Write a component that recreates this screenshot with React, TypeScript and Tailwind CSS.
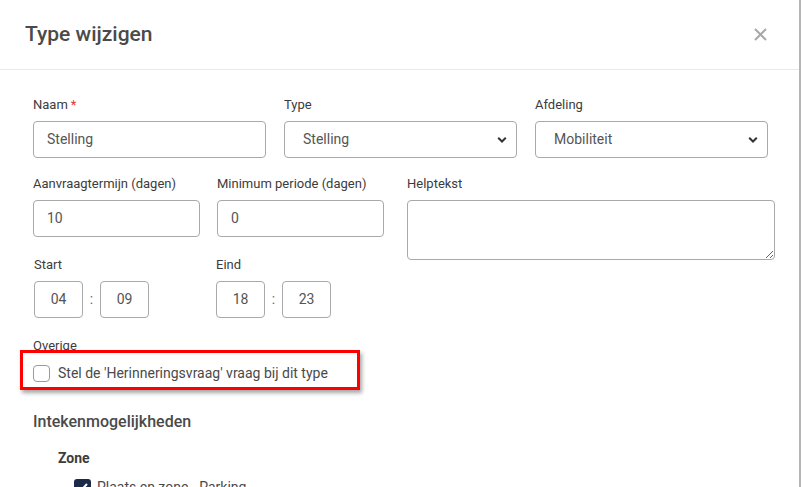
import React from "react";

const font = { fontFamily: "Roboto, 'Liberation Sans', sans-serif" };

function Label({ children, required }: { children: React.ReactNode; required?: boolean }) {
  return (
    <label className="block text-[13px] font-normal text-[#3c3c3c] leading-[16px] mb-[8px]">
      {children}
      {required && <span className="text-[#e3342f] ml-[3px]">*</span>}
    </label>
  );
}

function Chevron() {
  return (
    <svg className="absolute right-[10px] top-1/2 -translate-y-1/2" width="10" height="7" viewBox="0 0 10 7">
      <path d="M1.2 1.3 L5 5 L8.8 1.3" fill="none" stroke="#333" strokeWidth="2" />
    </svg>
  );
}

function Select({ value }: { value: string }) {
  return (
    <div className="relative">
      <div className="h-[37px] border border-[#a9a9a9] rounded-[4px] flex items-center px-[18px] text-[14px] text-[#555]">
        {value}
      </div>
      <Chevron />
    </div>
  );
}

function TextInput({ value, className = "" }: { value: string; className?: string }) {
  return (
    <div className={`h-[37px] border border-[#a9a9a9] rounded-[4px] flex items-center px-[13px] text-[14px] text-[#555] ${className}`}>
      {value}
    </div>
  );
}

function TimeBox({ value }: { value: string }) {
  return (
    <div className="w-[49px] h-[37px] border border-[#a9a9a9] rounded-[4px] flex items-center justify-center text-[14px] text-[#555]">
      {value}
    </div>
  );
}

function TimePair({ h, m }: { h: string; m: string }) {
  return (
    <div className="flex items-center">
      <TimeBox value={h} />
      <span className="w-[17px] text-center text-[14px] text-[#666]">:</span>
      <TimeBox value={m} />
    </div>
  );
}

export default function App() {
  return (
    <div style={font} className="w-[801px] h-[487px] overflow-hidden bg-white border-r-2 border-[#b5b5b5] relative">
      <div className="h-[70px] border-b border-[#e9e9e9] flex items-center justify-between pl-[25px] pr-[32px]">
        <h2 className="text-[21px] font-medium text-[#4a4a4a]">Type wijzigen</h2>
        <svg width="13" height="13" viewBox="0 0 13 13">
          <path d="M1 1 L12 12 M12 1 L1 12" stroke="#a8a8a8" strokeWidth="2" />
        </svg>
      </div>

      <div className="pl-[33px] pr-[24px] pt-[27px]">
        <div className="grid grid-cols-[233px_233px_233px] gap-x-[18px]">
          <div>
            <Label required>Naam</Label>
            <TextInput value="Stelling" />
          </div>
          <div>
            <Label>Type</Label>
            <Select value="Stelling" />
          </div>
          <div>
            <Label>Afdeling</Label>
            <Select value="Mobiliteit" />
          </div>
        </div>

        <div className="flex mt-[18px]">
          <div className="w-[375px]">
            <div className="flex gap-x-[17px]">
              <div className="w-[167px]">
                <Label>Aanvraagtermijn (dagen)</Label>
                <TextInput value="10" />
              </div>
              <div className="w-[167px]">
                <Label>Minimum periode (dagen)</Label>
                <TextInput value="0" />
              </div>
            </div>
            <div className="flex mt-[20px]">
              <div className="w-[183px] pl-[1px]">
                <Label>Start</Label>
                <TimePair h="04" m="09" />
              </div>
              <div>
                <Label>Eind</Label>
                <TimePair h="18" m="23" />
              </div>
            </div>
          </div>
          <div className="w-[368px]">
            <Label>Helptekst</Label>
            <textarea
              readOnly
              className="block w-[368px] h-[60px] border border-[#a9a9a9] rounded-[4px] resize-y"
            />
          </div>
        </div>

        <div className="mt-[20px]">
          <div className="text-[13px] font-normal text-[#3c3c3c] leading-[16px]">Overige</div>
          <div className="relative mt-[4px] h-[30px] flex items-center">
            <div className="absolute left-[-13px] top-[-8px] w-[340px] h-[40px] border-[3px] border-[#ff0000] shadow-[2px_3px_4px_rgba(0,0,0,0.35)]" />
            <div className="flex items-center gap-[8px]">
              <span className="w-[17px] h-[17px] border border-[#9a9a9a] rounded-[4px] bg-white" />
              <span className="text-[14px] text-[#4a4a4a]">Stel de 'Herinneringsvraag' vraag bij dit type</span>
            </div>
          </div>
        </div>

        <h3 className="mt-[22px] text-[16px] font-medium text-[#4a4a4a]">Intekenmogelijkheden</h3>
        <div className="pl-[25px] mt-[14px]">
          <div className="text-[14px] font-bold text-[#3d3d3d]">Zone</div>
          <div className="flex items-center gap-[6px] pl-[16px] mt-[8px]">
            <span className="w-[17px] h-[17px] rounded-[3px] bg-[#1d2a4a] flex items-center justify-center">
              <svg width="11" height="9" viewBox="0 0 11 9">
                <path d="M1 4.5 L4 7.5 L10 1" fill="none" stroke="#fff" strokeWidth="2" />
              </svg>
            </span>
            <span className="text-[14px] text-[#4a4a4a]">Plaats en zone - Parking</span>
          </div>
        </div>
      </div>
    </div>
  );
}
